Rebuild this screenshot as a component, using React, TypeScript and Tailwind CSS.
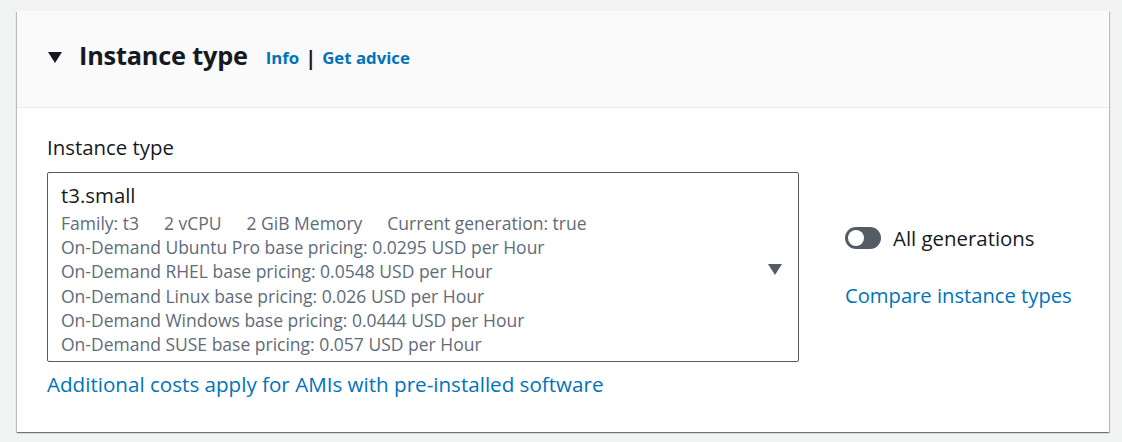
import React from 'react';

const details = [
  'On-Demand Ubuntu Pro base pricing: 0.0295 USD per Hour',
  'On-Demand RHEL base pricing: 0.0548 USD per Hour',
  'On-Demand Linux base pricing: 0.026 USD per Hour',
  'On-Demand Windows base pricing: 0.0444 USD per Hour',
  'On-Demand SUSE base pricing: 0.057 USD per Hour',
];

const Caret = ({ className }: { className?: string }) => (
  <svg viewBox="0 0 14 11" className={className}>
    <path d="M0 0 H14 L7 11 Z" fill="currentColor" />
  </svg>
);

export default function App() {
  return (
    <div className="w-[1122px] h-[442px] bg-[#f2f3f3] pt-[11px] pl-[17px] pr-[13px] font-['Open_Sans',sans-serif]">
      <div className="bg-white h-[421px] shadow-[0_1px_1px_0_rgba(0,28,36,0.35),1px_1px_1px_0_rgba(0,28,36,0.2),-1px_1px_1px_0_rgba(0,28,36,0.2)]">
        {/* Header */}
        <div className="h-[97px] bg-[#fafafa] border-b border-[#eaeded] flex items-center pl-[31px] pb-[6px]">
          <Caret className="w-[14px] h-[11px] text-[#16191f] mr-[17px] mt-[2px]" />
          <h2 className="text-[25.3px] font-bold text-[#16191f] tracking-[-0.2px]">Instance type</h2>
          <div className="ml-[18px] mt-[3px] flex items-center gap-[6px] text-[16.8px] font-bold">
            <a className="text-[#0073bb]">Info</a>
            <span className="text-[#16191f] text-[20px]">|</span>
            <a className="text-[#0073bb]">Get advice</a>
          </div>
        </div>

        {/* Body */}
        <div className="px-[30px] pt-[25px]">
          <label className="block text-[20.4px] leading-[28px] text-[#16191f]">Instance type</label>
          <div className="flex mt-[11px]">
            <div className="w-[752px] h-[190px] border border-[#545b64] rounded-[2px] pl-[13px] pr-[16px] pt-[7px] flex">
              <div className="flex-1">
                <div className="text-[20.4px] leading-[30px] text-[#16191f]">t3.small</div>
                <div className="text-[17.5px] leading-[24.2px] text-[#5f6b7a] mt-[1px]">
                  <div className="flex gap-[25px]">
                    <span>Family: t3</span>
                    <span>2 vCPU</span>
                    <span>2 GiB Memory</span>
                    <span>Current generation: true</span>
                  </div>
                  {details.map((d) => (
                    <div key={d}>{d}</div>
                  ))}
                </div>
              </div>
              <div className="flex items-center">
                <Caret className="w-[14px] h-[11px] text-[#545b64] mt-[-2px]" />
              </div>
            </div>

            <div className="ml-[46px] pt-[51px]">
              <div className="flex items-center gap-[12px]">
                <div className="w-[36px] h-[22px] rounded-full bg-[#545b64] flex items-center pl-[3px]">
                  <div className="w-[16px] h-[16px] rounded-full bg-white" />
                </div>
                <span className="text-[20.4px] text-[#16191f]">All generations</span>
              </div>
              <a className="block mt-[26px] text-[20.2px] text-[#0073bb]">Compare instance types</a>
            </div>
          </div>
          <a className="block mt-[8px] text-[20.6px] leading-[28px] text-[#0073bb]">
            Additional costs apply for AMIs with pre-installed software
          </a>
        </div>
      </div>
    </div>
  );
}
